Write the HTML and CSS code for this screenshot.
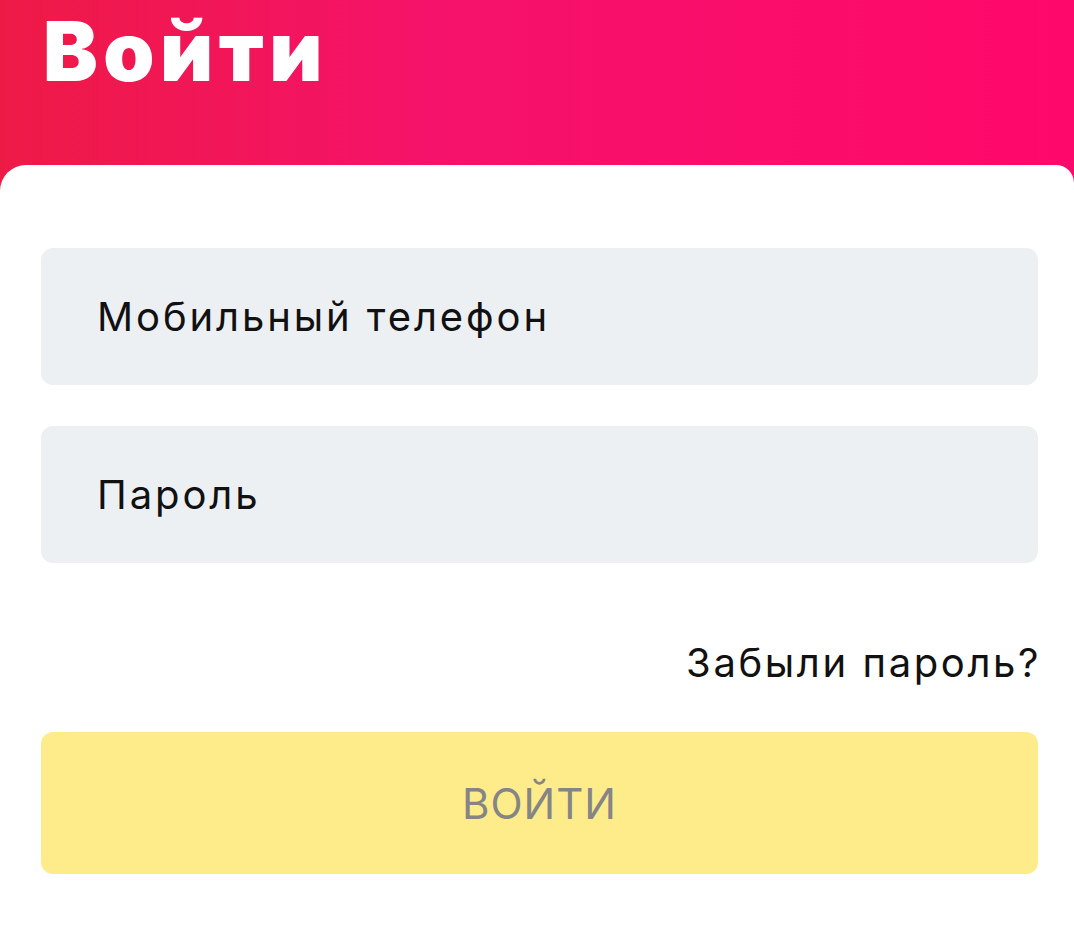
FILE: index.html
```html
<!DOCTYPE html>
<html lang="ru">
<head>
<meta charset="utf-8">
<link rel="stylesheet" href="styles.css">
</head>
<body>
<div class="page">
  <header class="header">
    <h1 class="title">Войти</h1>
  </header>
  <main class="card">
    <div class="field"><span class="placeholder">Мобильный телефон</span></div>
    <div class="field"><span class="placeholder">Пароль</span></div>
    <div class="forgot-row"><span class="forgot">Забыли пароль?</span></div>
    <div class="button"><span class="button-label">ВОЙТИ</span></div>
  </main>
</div>
</body>
</html>
```
FILE: styles.css
```css
html, body {
  margin: 0;
  padding: 0;
}
body {
  font-family: "Inter", "Noto Sans", sans-serif;
  background: #ffffff;
}
.page {
  width: 1074px;
  height: 928px;
  display: flex;
  flex-direction: column;
  background: linear-gradient(90deg, #ee1a46 0%, #f5126a 40%, #ff086b 100%);
  overflow: hidden;
}
.header {
  height: 165px;
  flex: none;
  box-sizing: border-box;
  padding: 7px 0 0 43px;
}
.title {
  margin: 0;
  color: #ffffff;
  font-family: "Inter", sans-serif;
  font-weight: 900;
  font-size: 82px;
  line-height: 90px;
  letter-spacing: 5.5px;
}
.card {
  flex: 1;
  background: #ffffff;
  border-radius: 26px 18px 0 0;
  padding: 83px 36px 0 41px;
  display: flex;
  flex-direction: column;
}
.field {
  height: 137px;
  flex: none;
  background: #edf0f3;
  border-radius: 12px;
  display: flex;
  align-items: center;
  padding-left: 56px;
  margin-bottom: 41px;
}
.placeholder {
  font-size: 40px;
  color: #111111;
  font-weight: 400;
  letter-spacing: 2.9px;
}
.forgot-row {
  display: flex;
  justify-content: flex-end;
  margin-top: 23px;
  height: 70px;
  align-items: center;
}
.forgot {
  font-size: 40px;
  color: #111111;
  letter-spacing: 2.6px;
  margin-right: -3px;
}
.button {
  margin-top: 35px;
  height: 142px;
  flex: none;
  background: #feec8a;
  border-radius: 12px;
  display: flex;
  align-items: center;
  justify-content: center;
}
.button-label {
  font-size: 42px;
  color: #858585;
  letter-spacing: 1px;
}
```
